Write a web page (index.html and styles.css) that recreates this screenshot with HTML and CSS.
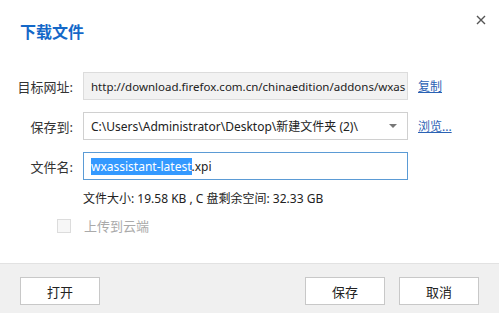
FILE: index.html
```html
<!DOCTYPE html>
<html lang="zh-CN">
<head>
    <meta charset="UTF-8">
    <meta name="viewport" content="width=device-width, initial-scale=1.0">
    <title>下载文件</title>
    <link rel="stylesheet" href="styles.css">
</head>
<body>
    <div class="dialog">
        <div class="header">
            <h1 class="title">下载文件</h1>
            <span class="close">
                <svg width="10" height="10" viewBox="0 0 10 10"><path d="M1 1L9 9M9 1L1 9" stroke="#555" stroke-width="1.4"/></svg>
            </span>
        </div>

        <div class="form">
            <label class="label">目标网址:</label>
            <div class="field field-readonly"><span class="clip">http://download.firefox.com.cn/chinaedition/addons/wxas</span></div>
            <a class="link" href="#">复制</a>

            <label class="label">保存到:</label>
            <div class="field field-select">
                <span class="clip">C:\Users\Administrator\Desktop\新建文件夹 (2)\</span>
                <svg class="arrow" width="8" height="4" viewBox="0 0 8 4"><path d="M0 0H8L4 4Z" fill="#777"/></svg>
            </div>
            <a class="link" href="#">浏览...</a>

            <label class="label">文件名:</label>
            <div class="field field-focus"><span class="sel">wxassistant-latest</span>.xpi</div>
            <span></span>
        </div>

        <div class="info">文件大小: 19.58 KB , C 盘剩余空间: 32.33 GB</div>

        <div class="upload">
            <span class="checkbox"></span>
            <span class="upload-text">上传到云端</span>
        </div>

        <div class="footer">
            <button class="button">打开</button>
            <div class="footer-right">
                <button class="button">保存</button>
                <button class="button">取消</button>
            </div>
        </div>
    </div>
</body>
</html>
```

FILE: styles.css
```css
body {
    margin: 0;
    padding: 0;
    background-color: #fff;
    font-family: "Noto Sans", "Noto Sans CJK SC", sans-serif;
    font-size: 12px;
    color: #222;
}

.dialog {
    width: 499px;
    height: 313px;
    display: flex;
    flex-direction: column;
    background-color: #fff;
}

.header {
    position: relative;
    height: 72px;
}

.title {
    margin: 0;
    padding: 21px 0 0 20px;
    font-size: 16px;
    font-weight: bold;
    line-height: 20px;
    color: #1468c8;
    font-family: "Noto Sans CJK SC", sans-serif;
}

.close {
    position: absolute;
    top: 12px;
    left: 476px;
    width: 10px;
    height: 10px;
}

.form {
    display: grid;
    grid-template-columns: 73px 325px auto;
    column-gap: 10px;
    row-gap: 12px;
    align-items: center;
}

.label {
    text-align: right;
    font-size: 13px;
    color: #333;
}

.field {
    height: 26px;
    border: 1px solid #d0d0d0;
    display: flex;
    align-items: center;
    padding: 0 7px;
    font-size: 12px;
    white-space: nowrap;
    overflow: hidden;
    color: #222;
    width: 309px;
}

.clip {
    overflow: hidden;
    flex: 1;
}

.field-readonly {
    background-color: #f2f2f2;
    border-color: #dcdcdc;
    font-size: 11.5px;
    padding-right: 1px;
    width: 315px;
}

.field-select .arrow {
    margin-left: 6px;
    margin-right: 3px;
}

.field-focus {
    border-color: #5b9bd5;
}

.sel {
    background-color: #3399ff;
    color: #fff;
}

.link {
    color: #2a62b4;
    font-size: 12px;
    text-decoration: underline;
}

.info {
    margin: 11px 0 0 83px;
    font-size: 12px;
    line-height: 16px;
    color: #222;
}

.upload {
    display: flex;
    align-items: center;
    margin: 9px 0 0 57px;
}

.checkbox {
    width: 12px;
    height: 12px;
    border: 1px solid #dcdcdc;
    background-color: #f7f7f7;
}

.upload-text {
    margin-left: 13px;
    font-size: 13px;
    color: #aaa;
}

.footer {
    margin-top: auto;
    box-sizing: border-box;
    height: 50px;
    border-top: 1px solid #e2e2e2;
    background-color: #f0f0f0;
    display: flex;
    justify-content: space-between;
    align-items: flex-start;
    padding: 13px 20px 0 20px;
}

.footer-right {
    display: flex;
    gap: 14px;
}

.button {
    width: 80px;
    height: 28px;
    border: 1px solid #c8c8c8;
    background-color: #fff;
    font-family: "Noto Sans CJK SC", sans-serif;
    font-size: 13px;
    color: #222;
    cursor: pointer;
}
```
